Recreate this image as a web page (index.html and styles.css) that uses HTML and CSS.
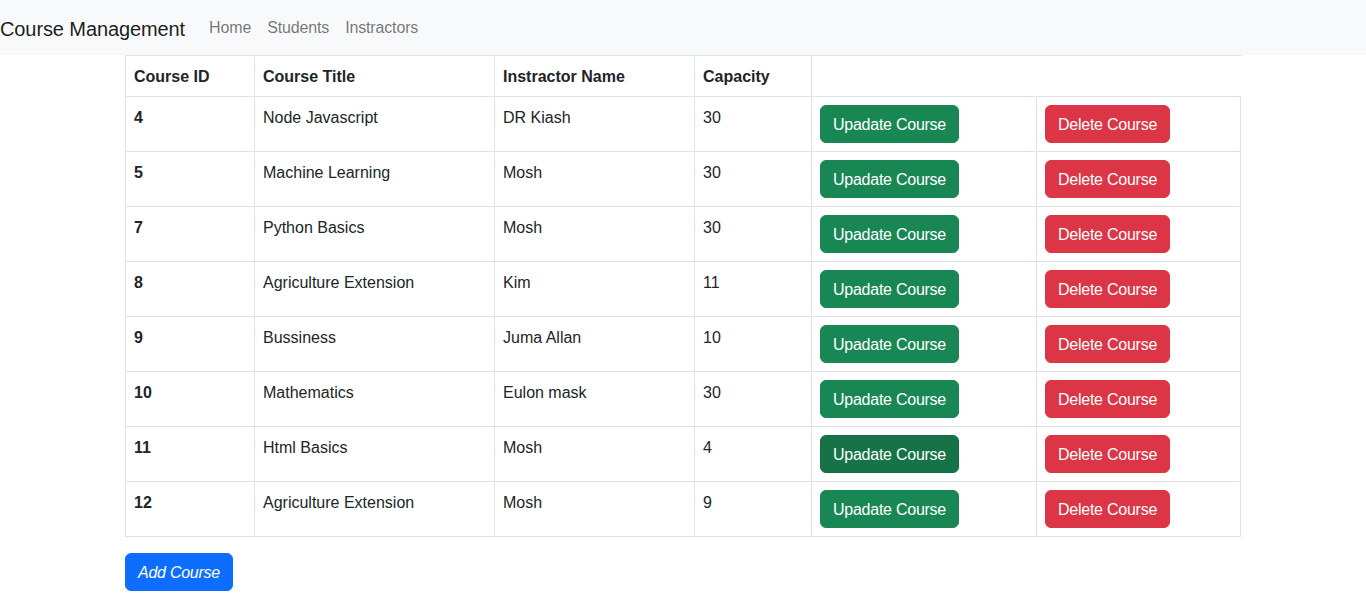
FILE: index.html
```html
<!DOCTYPE html>
<html lang="en">
<head>
<meta charset="utf-8">
<title>Course Management</title>
<link rel="stylesheet" href="styles.css">
</head>
<body>
<nav class="navbar">
  <a class="brand" href="#">Course Management</a>
  <ul class="nav">
    <li><a class="nav-link" href="#">Home</a></li>
    <li><a class="nav-link" href="#">Students</a></li>
    <li><a class="nav-link" href="#">Instractors</a></li>
  </ul>
</nav>
<main class="container">
  <table class="table">
    <colgroup>
      <col class="c1"><col class="c2"><col class="c3"><col class="c4"><col class="c5"><col class="c6">
    </colgroup>
    <thead>
      <tr>
        <th>Course ID</th>
        <th>Course Title</th>
        <th>Instractor Name</th>
        <th>Capacity</th>
        <th class="blank" colspan="2"></th>
      </tr>
    </thead>
    <tbody>
      <tr><th>4</th><td>Node Javascript</td><td>DR Kiash</td><td>30</td><td><button class="btn btn-success">Upadate Course</button></td><td><button class="btn btn-danger">Delete Course</button></td></tr>
      <tr><th>5</th><td>Machine Learning</td><td>Mosh</td><td>30</td><td><button class="btn btn-success">Upadate Course</button></td><td><button class="btn btn-danger">Delete Course</button></td></tr>
      <tr><th>7</th><td>Python Basics</td><td>Mosh</td><td>30</td><td><button class="btn btn-success">Upadate Course</button></td><td><button class="btn btn-danger">Delete Course</button></td></tr>
      <tr><th>8</th><td>Agriculture Extension</td><td>Kim</td><td>11</td><td><button class="btn btn-success">Upadate Course</button></td><td><button class="btn btn-danger">Delete Course</button></td></tr>
      <tr><th>9</th><td>Bussiness</td><td>Juma Allan</td><td>10</td><td><button class="btn btn-success">Upadate Course</button></td><td><button class="btn btn-danger">Delete Course</button></td></tr>
      <tr><th>10</th><td>Mathematics</td><td>Eulon mask</td><td>30</td><td><button class="btn btn-success">Upadate Course</button></td><td><button class="btn btn-danger">Delete Course</button></td></tr>
      <tr><th>11</th><td>Html Basics</td><td>Mosh</td><td>4</td><td><button class="btn btn-success is-hover">Upadate Course</button></td><td><button class="btn btn-danger">Delete Course</button></td></tr>
      <tr><th>12</th><td>Agriculture Extension</td><td>Mosh</td><td>9</td><td><button class="btn btn-success">Upadate Course</button></td><td><button class="btn btn-danger">Delete Course</button></td></tr>
    </tbody>
  </table>
  <button class="btn btn-primary add"><em>Add Course</em></button>
</main>
</body>
</html>
```
FILE: styles.css
```css
* { box-sizing: border-box; }
html, body { margin: 0; padding: 0; }
body {
  font-family: "Liberation Sans", Arial, sans-serif;
  font-size: 16px;
  line-height: 24px;
  color: #212529;
  background: #fff;
}
.navbar {
  display: flex;
  align-items: center;
  height: 55px;
  background: #f8f9fa;
  padding: 0;
}
.brand {
  font-size: 20px;
  line-height: 30px;
  color: rgba(0,0,0,.9);
  text-decoration: none;
  margin-right: 16px;
  padding-top: 2px;
  letter-spacing: -0.1px;
}
.nav {
  display: flex;
  list-style: none;
  margin: 0;
  padding: 0;
}
.nav-link {
  display: block;
  padding: 0 8px;
  color: rgba(0,0,0,.55);
  text-decoration: none;
  line-height: 24px;
  letter-spacing: -0.15px;
}
.container {
  width: 1140px;
  margin: 0 auto;
  padding: 0 12px;
}
.table {
  width: 1115px;
  table-layout: fixed;
  border-collapse: collapse;
  margin-bottom: 16px;
  vertical-align: top;
  border-color: #dee2e6;
}
.c1 { width: 129px; }
.c2 { width: 240px; }
.c3 { width: 200px; }
.c4 { width: 117px; }
.c5 { width: 225px; }
.c6 { width: 204px; }
.table tr {
  border-top: 1px solid #dee2e6;
  border-bottom: 1px solid #dee2e6;
}
.table th, .table td {
  padding: 9px 8px 7px;
  text-align: left;
  vertical-align: top;
  border-left: 1px solid #dee2e6;
  border-right: 1px solid #dee2e6;
  font-weight: 400;
}
.table th { font-weight: 700; }
.table th.blank { border-right: 0; }
.table td:nth-child(5), .table td:nth-child(6) { padding-top: 8px; padding-bottom: 8px; }
.btn {
  display: inline-block;
  font-family: inherit;
  font-size: 16px;
  line-height: 24px;
  padding: 7px 12px 5px;
  border: 1px solid transparent;
  border-radius: 6px;
  color: #fff;
  cursor: pointer;
  letter-spacing: -0.25px;
}
.btn-success { background: #198754; border-color: #198754; }
.btn-success.is-hover { background: #157347; border-color: #146c43; }
.btn-danger { background: #dc3545; border-color: #dc3545; }
.btn-primary { background: #0d6efd; border-color: #0d6efd; }
.add em { font-style: italic; }
```
